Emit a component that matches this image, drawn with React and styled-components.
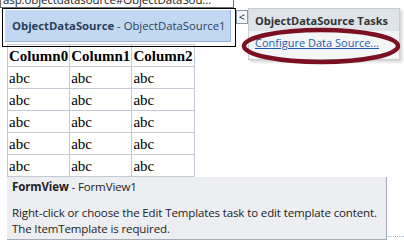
import React from 'react';
import styled, { createGlobalStyle } from 'styled-components';

const GlobalStyle = createGlobalStyle`
  html, body {
    margin: 0;
    padding: 0;
    background: #ffffff;
    overflow: hidden;
  }
`;

const UI_FONT = `"Open Sans", "Noto Sans", sans-serif`;

// Design surface
const Surface = styled.div`
  position: relative;
  width: 404px;
  height: 240px;
  font-family: ${UI_FONT};
  overflow: hidden;
`;

// Tag label above the selected control, cut at the top edge
const TagBar = styled.div`
  width: 232px;
  height: 7px;
  border: 1px solid #6d6d6d;
  border-top: none;
  overflow: hidden;
  position: relative;
  background: #ffffff;
`;

const TagText = styled.div`
  position: absolute;
  left: 2px;
  bottom: 0;
  font-size: 11.5px;
  line-height: 14px;
  letter-spacing: -0.1px;
  color: #222;
  white-space: nowrap;
`;

const TopRow = styled.div`
  display: flex;
  align-items: flex-start;
  padding: 2px 0 0 5px;
  height: 34px;
`;

const ControlHeader = styled.div`
  width: 226px;
  height: 32px;
  background: #c2d8f2;
  border-right: 1px solid #93b3da;
  border-bottom: 1px solid #93b3da;
  display: flex;
  align-items: center;
  padding-left: 7px;
  box-sizing: border-box;
  font-size: 11.3px;
  color: #2a3f5c;
  white-space: nowrap;
`;

const Bold = styled.span`
  font-weight: 700;
`;

// Black selection outline around the data source control
const Selection = styled.div`
  position: absolute;
  left: 2px;
  top: 8px;
  width: 232px;
  height: 37px;
  border: 1px solid #000;
  pointer-events: none;
`;

const Chevron = styled.div`
  position: absolute;
  left: 236px;
  top: 10px;
  width: 10px;
  height: 12px;
  border: 1px solid #8a97a8;
  background: #f4f6f9;
  font-size: 11px;
  line-height: 11px;
  text-align: center;
  color: #222;
`;

const TasksPanel = styled.div`
  position: absolute;
  left: 248px;
  top: 8px;
  width: 150px;
  background: #f4f5f7;
  border: 1px solid #c5ccd6;
  box-shadow: 2px 2px 3px rgba(0, 0, 0, 0.18);
`;

const TasksHeader = styled.div`
  height: 22px;
  background: #dfe3ea;
  font-weight: 700;
  font-size: 11px;
  color: #333;
  padding-left: 6px;
  display: flex;
  align-items: center;
`;

const TaskLink = styled.a`
  display: block;
  padding: 4px 0 9px 6px;
  font-size: 11px;
  color: #1d5bb0;
  text-decoration: underline;
`;

const Ellipse = styled.svg`
  position: absolute;
  left: 241px;
  top: 27px;
  pointer-events: none;
`;

const Grid = styled.table`
  margin: 0 0 0 7px;
  border-collapse: collapse;
  font-family: "Liberation Serif", "Times New Roman", serif;
  font-size: 15px;
  color: #000;
`;

const HeadCell = styled.th`
  width: 59px;
  height: 21px;
  padding: 0 1px;
  border: 1px solid #c3cad5;
  text-align: left;
  font-weight: 700;
  line-height: 18px;
`;

const Cell = styled.td`
  height: 21px;
  padding: 0 1px;
  border: 1px solid #c3cad5;
  line-height: 18px;
`;

const FormView = styled.div`
  margin: 0 0 0 7px;
  width: 380px;
  height: 63px;
  box-sizing: border-box;
  background: #eceef2;
  border-right: 1px solid #a5adb8;
  border-bottom: 1px solid #a5adb8;
  padding: 2px 5px;
  font-size: 11.5px;
  letter-spacing: -0.12px;
  color: #222;
  line-height: 16px;
  white-space: nowrap;
`;

const FormTitle = styled.div`
  margin-bottom: 10px;
`;

const Dots = styled.div`
  position: absolute;
  left: 388px;
  top: 236px;
  width: 16px;
  border-top: 1px dotted #a5b5cc;
`;

const rows = [0, 1, 2, 3, 4];

export default function App() {
  return (
    <Surface>
      <GlobalStyle />
      <TagBar>
        <TagText>asp:objectdatasource#ObjectDataSou...</TagText>
      </TagBar>
      <TopRow>
        <ControlHeader>
          <Bold>ObjectDataSource</Bold>&nbsp;- ObjectDataSource1
        </ControlHeader>
      </TopRow>
      <Grid>
        <thead>
          <tr>
            <HeadCell>Column0</HeadCell>
            <HeadCell>Column1</HeadCell>
            <HeadCell>Column2</HeadCell>
          </tr>
        </thead>
        <tbody>
          {rows.map((r) => (
            <tr key={r}>
              <Cell>abc</Cell>
              <Cell>abc</Cell>
              <Cell>abc</Cell>
            </tr>
          ))}
        </tbody>
      </Grid>
      <FormView>
        <FormTitle>
          <Bold>FormView</Bold> - FormView1
        </FormTitle>
        <div>Right-click or choose the Edit Templates task to edit template content.</div>
        <div>The ItemTemplate is required.</div>
      </FormView>
      <Dots />
      <Selection />
      <Chevron>&lt;</Chevron>
      <TasksPanel>
        <TasksHeader>ObjectDataSource Tasks</TasksHeader>
        <TaskLink>Configure Data Source...</TaskLink>
      </TasksPanel>
      <Ellipse width="162" height="38" viewBox="0 0 162 38">
        <ellipse cx="80" cy="19" rx="77" ry="16" fill="none" stroke="#7b1020" strokeWidth="4.5" />
      </Ellipse>
    </Surface>
  );
}
